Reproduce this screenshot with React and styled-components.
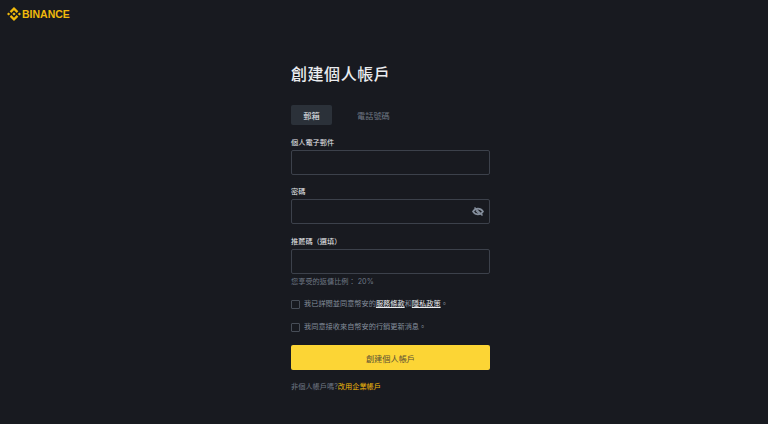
import React from "react";
import styled, { createGlobalStyle } from "styled-components";

const Global = createGlobalStyle`
  html, body { margin: 0; padding: 0; background: #181a20; }
  body { font-family: "Inter", "Noto Sans CJK TC", sans-serif; }
  * { box-sizing: border-box; }
`;

const Page = styled.div`
  width: 768px;
  height: 424px;
  background: #181a20;
  color: #eaecef;
  overflow: hidden;
`;

const Header = styled.header`
  height: 28px;
  padding: 7px 0 0 7px;
  display: flex;
  align-items: flex-start;
  gap: 1px;
`;

const Wordmark = styled.span`
  font-family: "Liberation Sans", sans-serif;
  font-size: 10.5px;
  line-height: 14px;
  font-weight: 700;
  letter-spacing: 0;
  color: #f0b90b;
`;

const Main = styled.main`
  width: 199px;
  margin-left: 291px;
  padding-top: 36px;
  display: flex;
  flex-direction: column;
`;

const Title = styled.h1`
  margin: 0;
  font-size: 16px;
  line-height: 20px;
  font-weight: 500;
  letter-spacing: 0.55px;
  color: #eaecef;
`;

const Tabs = styled.div`
  margin-top: 21px;
  display: flex;
  gap: 25px;
`;

const Tab = styled.div`
  width: ${(p) => (p.$active ? "41px" : "auto")};
  height: 20px;
  border-radius: 2px;
  padding-bottom: 1px;
  display: flex;
  align-items: center;
  justify-content: center;
  font-size: 8.2px;
  color: ${(p) => (p.$active ? "#eaecef" : "#6f7885")};
  background: ${(p) => (p.$active ? "#2b3139" : "transparent")};
`;

const Field = styled.div`
  margin-top: ${(p) => p.$top}px;
  display: flex;
  flex-direction: column;
`;

const Label = styled.label`
  font-size: 7.2px;
  line-height: 10px;
  margin-bottom: 2px;
  color: #eaecef;
`;

const InputBox = styled.div`
  height: 25px;
  border: 1px solid #3c414b;
  border-radius: 2px;
  padding-right: 5px;
  display: flex;
  align-items: center;
  justify-content: flex-end;
`;

const Hint = styled.div`
  margin-top: 3px;
  font-size: 7.2px;
  line-height: 10px;
  color: #6f7885;
`;

const CheckRow = styled.div`
  margin-top: ${(p) => p.$top}px;
  height: 12px;
  display: flex;
  align-items: center;
  gap: 4px;
`;

const Box = styled.span`
  width: 9px;
  height: 9px;
  border: 1px solid #474d57;
  border-radius: 1px;
  flex: none;
`;

const CheckText = styled.span`
  font-size: 7.2px;
  line-height: 10px;
  color: #848e9c;
`;

const TermLink = styled.a`
  color: #eaecef;
  text-decoration: underline;
`;

const Submit = styled.button`
  margin-top: 12px;
  height: 25px;
  width: 100%;
  border: 0;
  border-radius: 2px;
  background: #fcd535;
  color: #5c5236;
  font-family: inherit;
  font-size: 8.2px;
  padding: 0;
`;

const Foot = styled.div`
  margin-top: 12px;
  font-size: 7.2px;
  line-height: 10px;
  color: #6f7885;
`;

const FootLink = styled.a`
  color: #f0b90b;
`;

const Logo = () => (
  <svg width="14" height="14" viewBox="0 0 126.61 126.61" fill="#f0b90b">
    <path d="M38.73 53.2 63.3 28.63l24.59 24.58 14.3-14.3L63.3 0 24.43 38.88z" />
    <path d="M0 63.31l14.3-14.3 14.3 14.3-14.3 14.3z" />
    <path d="M38.73 73.41 63.3 97.98l24.59-24.58 14.3 14.29-.01.01-38.88 38.9-38.87-38.87-.02-.02z" />
    <path d="M98.01 63.31l14.3-14.3 14.3 14.3-14.3 14.3z" />
    <path d="M77.83 63.3 63.3 48.76 52.56 59.5l-1.24 1.24-2.54 2.55 14.52 14.53 14.53-14.52z" />
  </svg>
);

const EyeOff = () => (
  <svg width="12" height="12" viewBox="0 0 24 24" fill="none" stroke="#848e9c" strokeWidth="3.200" strokeLinecap="butt">
    <path d="M2 11c2.600-3.800 6-5.800 10-5.800s7.400 2 10 5.800c-2.600 3.800-6 5.800-10 5.800S4.600 14.800 2 11z" />
    <path d="M5 3l16 16" />
    <path d="M8 9l7 7" />
  </svg>
);

export default function App() {
  return (
    <Page>
      <Global />
      <Header>
        <Logo />
        <Wordmark>BINANCE</Wordmark>
      </Header>
      <Main>
        <Title>創建個人帳戶</Title>
        <Tabs>
          <Tab $active>郵箱</Tab>
          <Tab>電話號碼</Tab>
        </Tabs>
        <Field $top={13}>
          <Label>個人電子郵件</Label>
          <InputBox />
        </Field>
        <Field $top={12}>
          <Label>密碼</Label>
          <InputBox>
            <EyeOff />
          </InputBox>
        </Field>
        <Field $top={13}>
          <Label>推薦碼（選填）</Label>
          <InputBox />
        </Field>
        <Hint>您享受的返傭比例： 20%</Hint>
        <CheckRow $top={11}>
          <Box />
          <CheckText>
            我已詳閱並同意幣安的<TermLink>服務條款</TermLink>和<TermLink>隱私政策</TermLink>。
          </CheckText>
        </CheckRow>
        <CheckRow $top={11}>
          <Box />
          <CheckText>我同意接收來自幣安的行銷更新消息。</CheckText>
        </CheckRow>
        <Submit>創建個人帳戶</Submit>
        <Foot>
          非個人帳戶嗎?<FootLink>改用企業帳戶</FootLink>
        </Foot>
      </Main>
    </Page>
  );
}
